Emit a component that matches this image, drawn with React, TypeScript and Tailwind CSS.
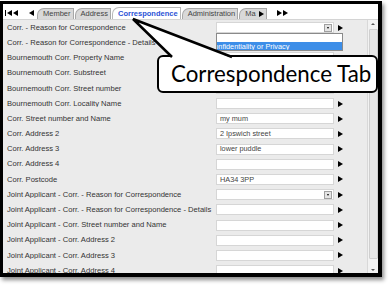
import React from 'react';

type Row = { label: string; value?: string; kind?: 'select' | 'input' };

const rows: Row[] = [
  { label: 'Corr. - Reason for Correspondence', kind: 'select' },
  { label: 'Corr. - Reason for Correspondence - Details' },
  { label: 'Bournemouth Corr. Property Name' },
  { label: 'Bournemouth Corr. Substreet' },
  { label: 'Bournemouth Corr. Street number' },
  { label: 'Bournemouth Corr. Locality Name' },
  { label: 'Corr. Street number and Name', value: 'my mum' },
  { label: 'Corr. Address 2', value: '2 Ipswich street' },
  { label: 'Corr. Address 3', value: 'lower puddle' },
  { label: 'Corr. Address 4' },
  { label: 'Corr. Postcode', value: 'HA34 3PP' },
  { label: 'Joint Applicant - Corr. - Reason for Correspondence', kind: 'select' },
  { label: 'Joint Applicant - Corr. - Reason for Correspondence - Details' },
  { label: 'Joint Applicant - Corr. Street number and Name' },
  { label: 'Joint Applicant - Corr. Address 2' },
  { label: 'Joint Applicant - Corr. Address 3' },
  { label: 'Joint Applicant - Corr. Address 4' },
];

const tabs = ['Member', 'Address', 'Correspondence', 'Administration'];

function Arrow() {
  return <span className="block w-0 h-0 border-y-[3px] border-y-transparent border-l-[5px] border-l-black" />;
}

function LeftArrow() {
  return <span className="block w-0 h-0 border-y-[3px] border-y-transparent border-r-[5px] border-r-black" />;
}

export default function App() {
  return (
    <div className="relative w-[392px] h-[287px] bg-white overflow-hidden pt-[1px] font-['Liberation_Sans',Arial,sans-serif]">
      <div className="w-[382px] h-[276px] border-t-[3px] border-l-[3px] border-r-[4px] border-b-[4px] border-black shadow-[2px_3px_4px_rgba(0,0,0,0.45)] flex flex-col overflow-hidden">
        {/* tab strip */}
        <div className="h-[16px] bg-white flex items-end pl-[2px] shrink-0 border-b border-[#d4d4d4]">
          <div className="flex items-center h-[12px] gap-[1px]">
            <span className="block w-[1px] h-[6px] bg-black" />
            <LeftArrow />
            <LeftArrow />
          </div>
          <div className="flex items-center h-[12px] ml-[11px]">
            <LeftArrow />
          </div>
          <div className="flex items-end ml-[3px]">
            {tabs.map((t) => {
              const active = t === 'Correspondence';
              return (
                <div
                  key={t}
                  className={`h-[11px] mr-[1px] pl-[5px] pr-[2px] rounded-tl-[7px] border border-b-0 flex items-center text-[7.5px] leading-none ${
                    active
                      ? 'bg-white border-[#b8b8b8] text-[#2a52d6] font-bold h-[12px]'
                      : 'bg-[#d9d9d9] border-[#a8a8a8] text-[#444]'
                  }`}
                >
                  {t}
                </div>
              );
            })}
            <div className="h-[11px] pl-[5px] pr-[2px] rounded-tl-[7px] border border-b-0 bg-[#d9d9d9] border-[#a8a8a8] flex items-center gap-[3px] text-[7.5px] leading-none text-[#444]">
              Ma
              <Arrow />
            </div>
          </div>
          <div className="flex items-center h-[12px] ml-[10px] gap-[1px]">
            <Arrow />
            <Arrow />
          </div>
        </div>

        {/* form body */}
        <div className="flex-1 flex bg-[#ebebeb] min-h-0">
          <div className="flex-1 flex flex-col">
            {rows.map((r, i) => (
              <div key={i} className="h-[15.2px] shrink-0 flex items-center">
                <div className="w-[213px] pl-[4px] text-[7.6px] text-[#333] whitespace-nowrap overflow-hidden leading-none">
                  {r.label}
                </div>
                <div className="w-[118px] h-[11px] bg-white border border-[#d6d6d6] flex items-center pl-[3px] text-[7.3px] text-[#444] leading-none">
                  <span className="flex-1">{r.value ?? ''}</span>
                  {r.kind === 'select' && (
                    <span className="w-[8px] h-[8px] mr-[1px] bg-[#e4e4e4] border border-[#a0a0a0] flex items-center justify-center">
                      <span className="block w-0 h-0 border-x-[1.5px] border-x-transparent border-t-[2px] border-t-black" />
                    </span>
                  )}
                </div>
                <div className="ml-[4px]">
                  <Arrow />
                </div>
              </div>
            ))}
          </div>
          {/* scrollbar */}
          <div className="w-[11px] bg-[#f2f2f2] border-l border-[#d8d8d8] flex flex-col items-center pt-[3px]">
            <span className="block w-0 h-0 border-x-[2px] border-x-transparent border-b-[2px] border-b-[#555]" />
            <div className="mt-[4px] w-[9px] h-[230px] bg-[#e6e6e6] border border-[#cfcfcf] rounded-[1px]" />
            <span className="mt-[10px] block w-0 h-0 border-x-[2px] border-x-transparent border-t-[2px] border-t-[#555]" />
          </div>
        </div>
      </div>

      {/* open dropdown list */}
      <div className="absolute left-[216px] top-[33px] w-[127px] h-[18px] bg-white border border-[#8a8a8a] overflow-hidden">
        <div className="h-[8px]" />
        <div className="h-[9px] bg-[#3d8ee8] text-white text-[7.3px] leading-[9px] whitespace-nowrap -ml-[8px]">
          Confidentiality or Privacy
        </div>
      </div>

      {/* callout */}
      <div className="absolute left-[157px] top-[55px] w-[221px] h-[38px] bg-white border-[2px] border-black rounded-[6px] flex items-center pl-[12px]">
        <span className="text-[22.3px] leading-none text-black font-['Lato','Open_Sans',sans-serif] whitespace-nowrap">
          Correspondence Tab
        </span>
      </div>
      <svg className="absolute left-0 top-0" width="392" height="287" viewBox="0 0 392 287">
        <polygon points="133,19 172,58 232,58" fill="white" />
        <polyline points="172,57 133,19 232,57" fill="none" stroke="black" strokeWidth="2.5" strokeLinejoin="miter" />
      </svg>
    </div>
  );
}
